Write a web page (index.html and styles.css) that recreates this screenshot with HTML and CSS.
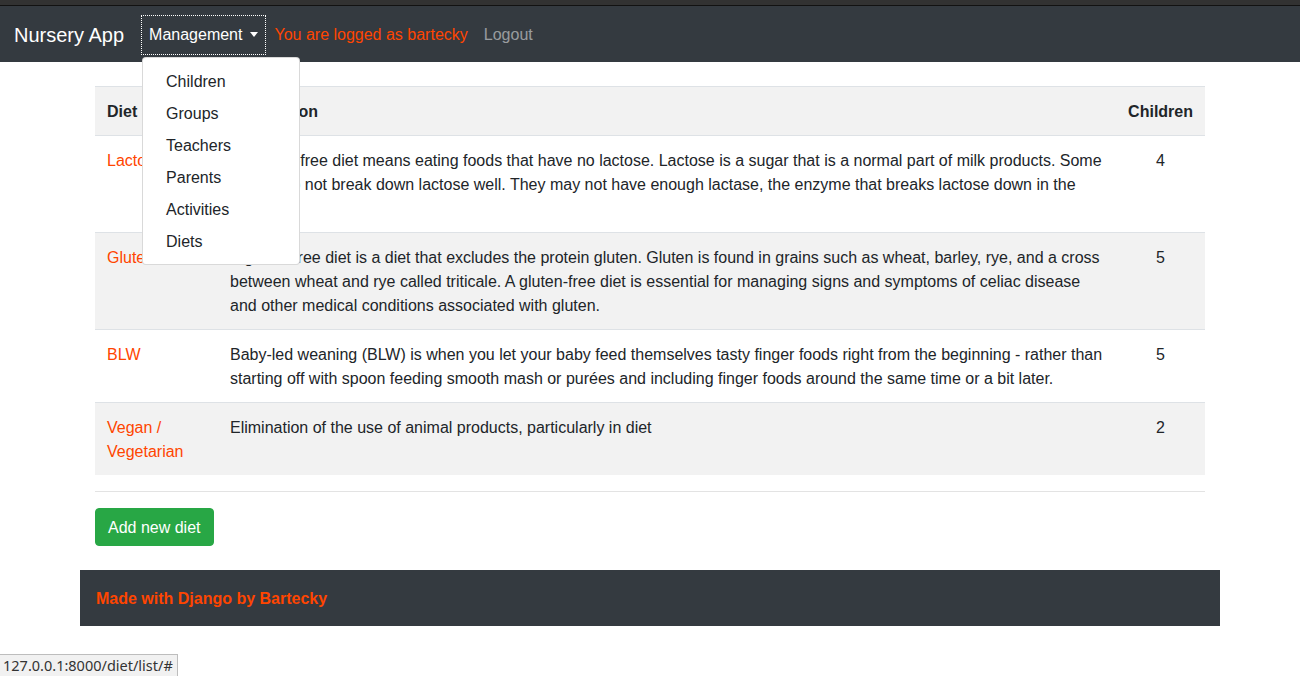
FILE: index.html
```html
<!DOCTYPE html>
<html>
<head>
<meta charset="utf-8">
<title>Diets</title>
<link rel="stylesheet" href="styles.css">
</head>
<body>
<div class="topstrip"></div>
<nav class="navbar">
  <a class="brand" href="#">Nursery App</a>
  <ul class="nav">
    <li class="nav-item dropdown">
      <a class="nav-link toggle" href="#">Management<span class="caret"></span></a>
      <div class="dropdown-menu">
        <a class="dropdown-item" href="#">Children</a>
        <a class="dropdown-item" href="#">Groups</a>
        <a class="dropdown-item" href="#">Teachers</a>
        <a class="dropdown-item" href="#">Parents</a>
        <a class="dropdown-item" href="#">Activities</a>
        <a class="dropdown-item" href="#">Diets</a>
      </div>
    </li>
    <li class="nav-item"><span class="nav-link logged">You are logged as bartecky</span></li>
    <li class="nav-item"><a class="nav-link muted" href="#">Logout</a></li>
  </ul>
</nav>

<main class="container">
  <table class="table">
    <thead>
      <tr>
        <th class="col-diet">Diet</th>
        <th>Description</th>
        <th class="col-children">Children</th>
      </tr>
    </thead>
    <tbody>
      <tr>
        <td><a href="#">Lactose free</a></td>
        <td>A lactose-free diet means eating foods that have no lactose. Lactose is a sugar that is a normal part of milk products. Some people do not break down lactose well. They may not have enough lactase, the enzyme that breaks lactose down in the body.</td>
        <td class="num">4</td>
      </tr>
      <tr>
        <td><a href="#">Gluten free</a></td>
        <td>A gluten-free diet is a diet that excludes the protein gluten. Gluten is found in grains such as wheat, barley, rye, and a cross between wheat and rye called triticale. A gluten-free diet is essential for managing signs and symptoms of celiac disease and other medical conditions associated with gluten.</td>
        <td class="num">5</td>
      </tr>
      <tr>
        <td><a href="#">BLW</a></td>
        <td>Baby-led weaning (BLW) is when you let your baby feed themselves tasty finger foods right from the beginning - rather than starting off with spoon feeding smooth mash or purées and including finger foods around the same time or a bit later.</td>
        <td class="num">5</td>
      </tr>
      <tr>
        <td><a href="#">Vegan / Vegetarian</a></td>
        <td>Elimination of the use of animal products, particularly in diet</td>
        <td class="num">2</td>
      </tr>
    </tbody>
  </table>
  <hr class="divider">
  <div class="actions">
    <a class="btn-success" href="#">Add new diet</a>
  </div>
</main>

<footer class="container footer">
  <span class="footer-text">Made with Django by Bartecky</span>
</footer>

<div class="statusbar">127.0.0.1:8000/diet/list/#</div>
</body>
</html>
```

FILE: styles.css
```css
* { box-sizing: border-box; }

html, body {
  margin: 0;
  padding: 0;
  background: #fff;
  font-family: "Liberation Sans", Arial, sans-serif;
  font-size: 16px;
  line-height: 24px;
  color: #212529;
}

body { padding-right: 1px; }

a { text-decoration: none; }

.topstrip {
  height: 6px;
  background: #323232;
  border-bottom: 1px solid #121212;
}

.navbar {
  height: 56px;
  background: #343a40;
  display: flex;
  align-items: center;
  padding: 9px 16px 7px 16px;
}

.brand {
  font-size: 20px;
  line-height: 30px;
  color: #fff;
  margin-right: 17px;
  margin-left: -2px;
}

.nav {
  list-style: none;
  display: flex;
  margin: 0;
  padding: 0;
}

.nav-item { position: relative; }

.nav-link {
  display: block;
  padding: 8px 8px;
  color: rgba(255,255,255,.5);
}

.nav-link.toggle {
  color: #fff;
  outline: 1px dotted #fff;
  outline-offset: -1px;
  padding: 8px 8px 8px 8px;
}

.caret {
  display: inline-block;
  margin-left: 8px;
  vertical-align: 3px;
  border-top: 5px solid #fff;
  border-left: 4px solid transparent;
  border-right: 4px solid transparent;
}

.nav-link.logged { color: #ff4500; }

.dropdown-menu {
  position: absolute;
  top: 42px;
  left: 1px;
  z-index: 10;
  width: 158px;
  background: #fff;
  border: 1px solid rgba(0,0,0,.15);
  border-radius: 4px;
  padding: 7px 0;
  display: flex;
  flex-direction: column;
}

.dropdown-item {
  display: block;
  padding: 5px 23px 3px 23px;
  color: #212529;
  white-space: nowrap;
}

.container {
  width: 1140px;
  margin: 0 auto;
  padding: 0 15px;
}

main.container { padding-top: 24px; }

.table {
  width: 100%;
  border-collapse: collapse;
  margin-bottom: 16px;
}

.table th, .table td {
  padding: 13px 12px 11px 12px;
  vertical-align: top;
  text-align: left;
  border-top: 1px solid #dee2e6;
}

.table thead th {
  font-weight: bold;
  background: #f2f2f2;
  border-bottom: 1px solid #dee2e6;
}

.table tbody tr:nth-child(even) { background: #f2f2f2; }

.table a { color: #ff4500; }

.col-diet { width: 123px; }
.col-children { width: 88px; }

.table td.num { text-align: center; }

.divider {
  border: 0;
  border-top: 1px solid #e3e3e3;
  margin: 0 0 16px 0;
  height: 0;
}

.actions { display: flex; }

.btn-success {
  display: block;
  background: #28a745;
  color: #fff;
  border-radius: 4px;
  padding: 7px 12px 5px 12px;
  line-height: 24px;
  border: 1px solid #28a745;
}

.footer {
  margin-top: 24px;
  background: #343a40;
  padding: 17px 16px 15px 16px;
}

.footer-text {
  color: #ff4500;
  font-weight: bold;
}

.statusbar {
  position: fixed;
  left: 0;
  bottom: 0;
  height: 22px;
  padding: 0 4px 0 3px;
  background: #f1f1f1;
  border: 1px solid #bdbdbd;
  border-left: 0;
  border-bottom: 0;
  font-family: "Noto Sans", "DejaVu Sans", sans-serif;
  font-size: 14.5px;
  line-height: 21px;
  color: #333;
}
```
